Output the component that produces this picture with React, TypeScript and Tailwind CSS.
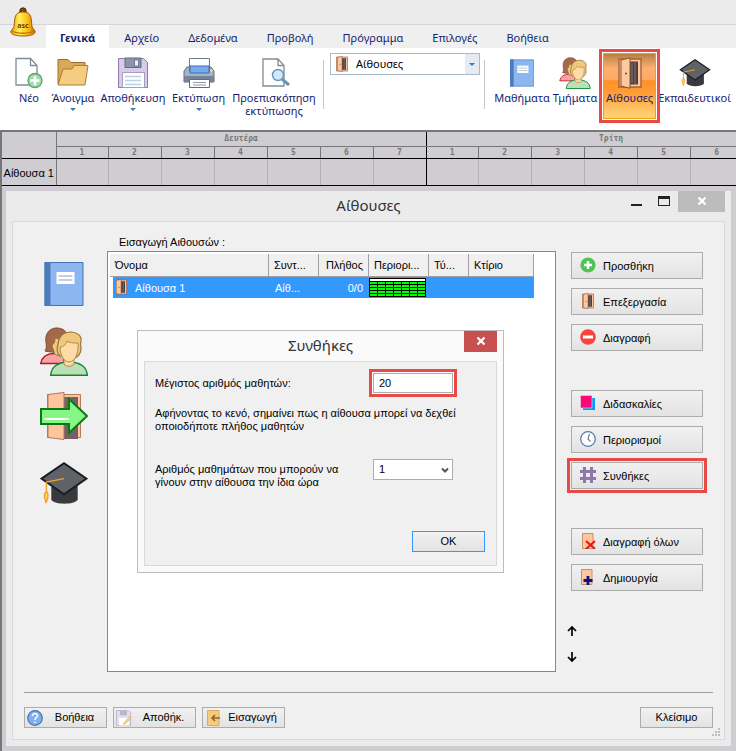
import { useState, type ReactNode } from "react";

const TABS = ["Γενικά", "Αρχείο", "Δεδομένα", "Προβολή", "Πρόγραμμα", "Επιλογές", "Βοήθεια"];
const PERIODS = [1, 2, 3, 4, 5, 6, 7];
const DAYS = ["Δευτέρα", "Τρίτη"];

function DoorIcon({ className }: { className: string }) {
  return (
    <svg className={className} viewBox="0 0 24 32" aria-hidden="true">
      <path d="M1 2h22v28H1z" fill="#ffc59a" stroke="#a3623f" strokeWidth="1.4" />
      <path d="M11 4.5h9v23h-9z" fill="#4b4043" />
      <path d="M17 5v22M14 6v20" stroke="#7a6a6e" strokeWidth="1.3" />
      <path d="M3 3 12 .8v30.4L3 29z" fill="#ffc9a0" stroke="#8f5031" strokeWidth="1" />
      <circle cx="8" cy="16.5" r="1" fill="#7d3c1d" />
    </svg>
  );
}

function DoorArrowIcon() {
  return (
    <svg className="h-12 w-12" viewBox="0 0 48 48" aria-hidden="true">
      <path d="M7.5 2.5h33v43h-33z" fill="#ffc59a" stroke="#b07a5c" />
      <path d="M24 5h14v42H24z" fill="#75606a" />
      <path d="M8 2.5 24 .5v47L8 45.5z" fill="#ffc59a" stroke="#b07a5c" />
      <path d="M1 17h28V7l18 17-18 17V32H1z" fill="#86f686" stroke="#0a7a12" strokeWidth="2" />
      <path d="M4 27h25" stroke="#fff" strokeWidth="2" />
    </svg>
  );
}

function BookIcon({ className }: { className: string }) {
  return (
    <svg className={className} viewBox="0 0 39 44" aria-hidden="true">
      <path d="M.5.5h38v43H.5z" fill="#8bb6f0" stroke="#4473b3" />
      <path d="M0 0h6v44H0z" fill="#4d7cbc" />
      <path d="M12 10h18v12H12z" fill="#fff" />
      <path d="M14 14h14M14 18h14" stroke="#b3bfd3" strokeWidth="1.4" />
    </svg>
  );
}

function PeopleIcon({ className }: { className: string }) {
  return (
    <svg className={className} viewBox="0 0 48 49" aria-hidden="true">
      <path d="M.7 36.5C2 30 7 26.5 14 26.5h10v10z" fill="#f7a3a3" stroke="#b8141c" strokeWidth="1.3" />
      <path d="M5 24C8 20 5 15 6 10 7 4 12 .8 17 1c5 .2 8 2 10 6l-8 17c-3 2-9 1-14 0z" fill="#a5694a" stroke="#7d4c33" />
      <path d="M12 18c2-1 3-3 3-7 2 1 6 1 8 0l1 14c-2 5-10 4-10 0 0-2-2-4-2-7z" fill="#efc87c" stroke="#94723a" />
      <path d="M10.7 48.3C11 40 18 35 29 35s18 5 18.300 13.300z" fill="#b9e0b9" stroke="#14852a" strokeWidth="1.4" />
      <path d="M24 30v7c2 3 8 3 10 0v-7z" fill="#fddca8" stroke="#b08a4a" />
      <path d="M20 29c-4-4-3-8-2-12 1-8 6-12 13-12 6 0 11 4 10 9-1 3 0 6 0 8 0 4-3 8-6 9z" fill="#efc87c" stroke="#96733a" strokeWidth="1.2" />
      <path d="M20 20c4 0 6-3 7-6 2 2 7 2 11 2 1 10-3 19-9 19-5 0-9-7-9-15z" fill="#fddca8" stroke="#b08a4a" />
    </svg>
  );
}

function CapIcon({ className }: { className: string }) {
  return (
    <svg className={className} viewBox="0 0 48 44" aria-hidden="true">
      <path d="M11 22h27v17c-4 5-23 5-27 0z" fill="#3a3a3e" />
      <path d="M1 17 24 1.2 47 17 24 33z" fill="#616266" stroke="#15202c" strokeWidth="2" />
      <path d="M24 17 6 20.5V32" fill="none" stroke="#f2a024" strokeWidth="1.5" />
      <path d="M5 31c-3 4 0 6 .5 11C7 38 9 36 7 31z" fill="#ffcf70" stroke="#f2a024" strokeWidth="1.3" />
    </svg>
  );
}

function BellLogo() {
  return (
    <svg className="h-[30px] w-[26px]" viewBox="0 0 26 30" aria-hidden="true">
      <defs>
        <linearGradient id="bell">
          <stop offset="0" stopColor="#e89a08" />
          <stop offset=".35" stopColor="#fff25a" />
          <stop offset=".7" stopColor="#fbbd10" />
          <stop offset="1" stopColor="#c96c04" />
        </linearGradient>
      </defs>
      <circle cx="13" cy="4" r="3.2" fill="#7a4a0c" stroke="#4d2c06" />
      <path d="M4 20C5 11 4 5 13 5s8 6 9 15l3 4c1 3-4 5-12 5S0 27 1 24z" fill="url(#bell)" stroke="#a35a06" />
      <path d="M2 24c5 3 17 3 22 0" fill="none" stroke="#c67607" strokeWidth="1.3" />
      <text x="13" y="21" textAnchor="middle" fontSize="7" fontWeight="700" fill="#7a3b05">asc</text>
    </svg>
  );
}

function NewIcon() {
  return (
    <svg className="h-8 w-7" viewBox="0 0 28 32" aria-hidden="true">
      <path d="M1 1.5h14.500l6.500 7V28H1z" fill="#fff" stroke="#7f8d99" strokeWidth="1.3" />
      <path d="M15.5 1.5v7H22" fill="none" stroke="#7f8d99" strokeWidth="1.3" />
      <circle cx="20" cy="23.5" r="7" fill="#a3dbaa" stroke="#5ba46a" strokeWidth="1.3" />
      <path d="M20 19v9M15.5 23.5h9" stroke="#fff" strokeWidth="2.5" />
    </svg>
  );
}

function FolderIcon() {
  return (
    <svg className="h-8 w-8" viewBox="0 0 32 32" aria-hidden="true">
      <path d="M1 27V2.5h10l3 3h14V14L25 27z" fill="#dba956" stroke="#98702f" />
      <path d="M1 28 6 12h9l2-3.500h14L28 28z" fill="#f5cd80" stroke="#a87d3a" />
    </svg>
  );
}

function SaveIcon() {
  return (
    <svg className="h-8 w-8" viewBox="0 0 32 32" aria-hidden="true">
      <path d="M1.5 1.5h25l4 4v25h-29z" fill="#d8cbea" stroke="#8d7aa6" />
      <path d="M8 1h16v9.500H8z" fill="#8c96a8" stroke="#5f6a7c" />
      <path d="M17.5 3h4v6h-4z" fill="#eef1f5" stroke="#5f6a7c" strokeWidth=".8" />
      <path d="M5.5 15.5h22v15h-22z" fill="#fff" stroke="#a99bc0" />
      <path d="M8 19.5h16M8 23.5h16M8 27.5h16" stroke="#b9d3e6" strokeWidth="1.3" />
    </svg>
  );
}

function PrintIcon() {
  return (
    <svg className="h-8 w-8" viewBox="0 0 32 32" aria-hidden="true">
      <path d="M1 14l3-4h24l3 4v11H1z" fill="#a4b3c7" stroke="#5c6b7e" />
      <path d="M1 19h30v6H1z" fill="#75849a" />
      <path d="M6.5 1.5h20v13h-20z" fill="#fff" stroke="#6d7c8e" />
      <path d="M7 9h19v7H7z" fill="#78abee" stroke="#3d6eb0" />
      <circle cx="28.5" cy="13.5" r="1.2" fill="#ffe27a" />
      <path d="M6.5 22.5h20v8h-20z" fill="#fff" stroke="#5c6b7e" />
      <path d="M10 25.5h13M10 28h13" stroke="#8c98a8" strokeWidth="1.2" />
    </svg>
  );
}

function PreviewIcon() {
  return (
    <svg className="h-8 w-8" viewBox="0 0 32 32" aria-hidden="true">
      <path d="M5 2h15l6 6.500V29H5z" fill="#fff" stroke="#7f8d99" strokeWidth="1.3" />
      <path d="M20 2v6.500h6" fill="none" stroke="#7f8d99" strokeWidth="1.3" />
      <path d="m24 22 7 6" stroke="#6a93b8" strokeWidth="3" />
      <circle cx="20" cy="18" r="5.5" fill="#cfe7fb" stroke="#6a93b8" strokeWidth="1.4" />
    </svg>
  );
}

const PlusIcon = () => (
  <svg className="h-4 w-4" viewBox="0 0 16 16" aria-hidden="true">
    <circle cx="8" cy="8" r="7.6" fill="#4cc552" />
    <path d="M8 4v8M4 8h8" stroke="#fff" strokeWidth="2.5" />
  </svg>
);

const MinusIcon = () => (
  <svg className="h-4 w-4" viewBox="0 0 16 16" aria-hidden="true">
    <circle cx="8" cy="8" r="7.8" fill="#f8453f" />
    <path d="M3 8h10" stroke="#fff" strokeWidth="3" />
  </svg>
);

const CardsIcon = () => (
  <svg className="h-4 w-4" viewBox="0 0 16 16" aria-hidden="true">
    <path d="M3 3h12v12H3z" fill="#0a95ff" />
    <path d="M.5.5h11.500V13H.5z" fill="#ff0675" stroke="#d6e4e8" strokeWidth=".6" />
  </svg>
);

const ClockIcon = () => (
  <svg className="h-4 w-4" viewBox="0 0 16 16" aria-hidden="true">
    <circle cx="8" cy="8" r="7.3" fill="#fff" stroke="#4f79a8" strokeWidth="1.2" />
    <path d="m9.5 3-1.500 5 2.500 2.500" fill="none" stroke="#6b7f96" strokeWidth="1.2" />
  </svg>
);

const HashIcon = () => (
  <svg className="h-4 w-4" viewBox="0 0 16 16" shapeRendering="crispEdges" aria-hidden="true">
    <path d="M4.5 0v16M11.5 0v16M0 4.5h16M0 11.5h16" stroke="#8f78a8" strokeWidth="3" />
  </svg>
);

const RemoveAllIcon = () => (
  <svg className="h-4 w-4" viewBox="0 0 16 16" aria-hidden="true">
    <path d="M2.5.5H13v15H2.500z" fill="#ffc7a0" stroke="#c98f6d" />
    <path d="m6 8 9 8M15 8l-9 8" stroke="#f01010" strokeWidth="2" />
  </svg>
);

const GenerateIcon = () => (
  <svg className="h-4 w-4" viewBox="0 0 16 16" aria-hidden="true">
    <path d="M1.5.5H12v15H1.500z" fill="#ffc7a0" stroke="#c98f6d" />
    <path d="M8 7v9M3.5 11.5h9" stroke="#0a1380" strokeWidth="2.8" />
  </svg>
);

const HelpIcon = () => (
  <svg className="h-4 w-4" viewBox="0 0 16 16" aria-hidden="true">
    <circle cx="8" cy="8" r="7.3" fill="#82b0ee" stroke="#4272b4" strokeWidth="1.2" />
    <path d="M5.5 6C5.5 2.5 11 3 10.5 6 10.3 7.5 8 7.5 8 10M8 11.5v1.500" fill="none" stroke="#fff" strokeWidth="1.5" />
  </svg>
);

const SaveEditIcon = () => (
  <svg className="h-4 w-4" viewBox="0 0 16 16" aria-hidden="true">
    <path d="M.5.5h12l2 2v13H.5z" fill="#e6def0" stroke="#c3b8d2" />
    <path d="M4 .5h7v5H4z" fill="#b4bac6" />
    <path d="M3 8h10v7.500H3z" fill="#fff" />
    <path d="m8 13 6-7 1.500 1.500-6 6-2 .8z" fill="#f6d99a" stroke="#c9a866" strokeWidth=".7" />
  </svg>
);

const ImportIcon = () => (
  <svg className="h-4 w-4" viewBox="0 0 16 16" aria-hidden="true">
    <path d="M2.5.5H14v15H2.500z" fill="#f7cb7e" stroke="#d9ac5c" />
    <path d="M15 8H7M10 5 7 8l3 3" fill="none" stroke="#8a672a" strokeWidth="1.6" />
  </svg>
);

interface RibbonButtonProps {
  icon: ReactNode;
  label: string;
  width: string;
  menu?: boolean;
}

function RibbonButton({ icon, label, width, menu }: RibbonButtonProps) {
  return (
    <button className={`flex shrink-0 flex-col items-center ${width}`}>
      <span className="flex h-8 items-center">{icon}</span>
      <span className="mt-0.5 text-center leading-[13px] whitespace-pre">{label}</span>
      {menu && <span className="mt-1 border-x-[3px] border-t-[3px] border-x-transparent border-t-[#3f7cb4]" />}
    </button>
  );
}

function SideButton({ icon, label }: { icon: ReactNode; label: string }) {
  return (
    <button className="flex h-[27px] w-[132px] items-center border border-[#acacac] bg-linear-to-b from-[#f1f1f1] to-[#e3e3e3] pl-2">
      <span className="flex w-4 justify-center">{icon}</span>
      <span className="ml-[7px] pt-0.5">{label}</span>
    </button>
  );
}

function FooterButton({ icon, label }: { icon: ReactNode; label: string }) {
  return (
    <button className="flex h-[21px] w-[83px] items-center border border-[#acacac] bg-linear-to-b from-[#f1f1f1] to-[#e3e3e3] pl-0.5">
      {icon}
      <span className="flex-1 text-center">{label}</span>
    </button>
  );
}

function Ribbon() {
  const [tab, setTab] = useState(TABS[0]);

  return (
    <header className="relative shrink-0 text-[#141e6e] font-['Noto_Sans','Open_Sans',sans-serif] text-[11px]">
      <div className="h-[25px] border-b border-[#d6d6d6] bg-[#ebebeb]" />
      <nav className="flex h-[23px] bg-[#efefef] pl-[46px]">
        {TABS.map((t) => (
          <button
            key={t}
            onClick={() => setTab(t)}
            className={`mr-px px-3.5 pt-[3px] ${t === tab ? "bg-white font-bold" : ""}`}
          >
            {t}
          </button>
        ))}
      </nav>
      <div className="absolute top-[7px] left-2.5">
        <BellLogo />
      </div>
      <div className="flex h-[82px] items-start overflow-hidden bg-white pl-3">
        <div className="flex pt-[9px]">
          <RibbonButton icon={<NewIcon />} label="Νέο" width="w-[34px]" />
          <RibbonButton icon={<FolderIcon />} label="Άνοιγμα" width="w-[54px]" menu />
          <RibbonButton icon={<SaveIcon />} label="Αποθήκευση" width="w-[66px]" menu />
          <RibbonButton icon={<PrintIcon />} label="Εκτύπωση" width="w-[65px]" menu />
          <RibbonButton icon={<PreviewIcon />} label={"Προεπισκόπηση\nεκτύπωσης"} width="w-[86px]" />
        </div>
        <div className="mt-3 ml-1.5 h-[49px] w-px shrink-0 bg-[#c6c6c6]" />
        <button className="mt-[5px] ml-1.5 flex h-[22px] w-[150px] shrink-0 items-center border border-[#abbac9] bg-white pl-[5px] text-left text-black">
          <DoorIcon className="h-4 w-3" />
          <span className="ml-2 flex-1">Αίθουσες</span>
          <span className="flex h-full w-3.5 items-center justify-center bg-[#e6eaf3]">
            <span className="border-x-[3px] border-t-[3px] border-x-transparent border-t-[#3f7cb4]" />
          </span>
        </button>
        <div className="mt-3 ml-1 h-[49px] w-px shrink-0 bg-[#c6c6c6]" />
        <div className="ml-2 flex pt-px">
          <div className="flex pt-2">
            <RibbonButton icon={<BookIcon className="h-7 w-6" />} label="Μαθήματα" width="w-[58px]" />
            <RibbonButton icon={<PeopleIcon className="h-8 w-8" />} label="Τμήματα" width="w-12" />
          </div>
          <div className="z-10 shrink-0 border-[3px] border-[#e84a45] bg-white p-px">
            <div className="h-[66px] border border-[#f0a010] bg-[linear-gradient(to_bottom,#b9803e_0%,#fbb072_22%,#ffa862_40%,#ff8f24_42%,#ff9f38_62%,#ffd67c_100%)] pt-[3px]">
              <RibbonButton icon={<DoorIcon className="h-8 w-6" />} label="Αίθουσες" width="w-[51px]" />
            </div>
          </div>
          <div className="pt-2">
            <RibbonButton icon={<CapIcon className="h-7 w-8" />} label="Εκπαιδευτικοί" width="w-[69px]" />
          </div>
        </div>
      </div>
    </header>
  );
}

function Timetable() {
  return (
    <div className="shrink-0 overflow-hidden border-t-2 border-[#777]">
      <table className="w-[794px] table-fixed border-collapse text-center text-[#777]">
        <colgroup>
          <col className="w-[54px]" />
          {DAYS.flatMap((d) => PERIODS.map((p) => <col key={d + p} className={p === 1 ? "w-[52px]" : "w-[53px]"} />))}
        </colgroup>
        <thead className="text-[8px] leading-[9px] font-bold font-['DejaVu_Sans_Mono',monospace]">
          <tr className="h-3.5">
            <td rowSpan={2} className="border-r border-b border-r-[#777] border-b-black" />
            {DAYS.map((d) => (
              <th key={d} colSpan={7} className="border-r border-b border-r-black border-b-[#777] p-0">
                {d}
              </th>
            ))}
          </tr>
          <tr className="h-3">
            {DAYS.flatMap((d) =>
              PERIODS.map((p) => (
                <th key={d + p} className={`border-r border-b border-b-black p-0 ${p === 7 ? "border-r-black" : "border-r-[#777]"}`}>
                  {p}
                </th>
              ))
            )}
          </tr>
        </thead>
        <tbody>
          <tr className="h-[27px]">
            <th className="border-r border-b border-r-[#777] border-b-black p-0 pt-1 text-[11px] font-normal whitespace-nowrap text-black font-['Liberation_Sans',sans-serif]">
              Αίθουσα 1
            </th>
            {DAYS.flatMap((d) =>
              PERIODS.map((p) => (
                <td key={d + p} className={`border-r border-b border-b-black ${p === 7 ? "border-r-black" : "border-r-[#b2b0b4]"}`} />
              ))
            )}
          </tr>
        </tbody>
      </table>
    </div>
  );
}

function RoomList() {
  const head = "border-r border-b border-[#a0a0a0] bg-[#f0f0f0] px-[5px] pt-0.5 pb-0 font-normal";

  return (
    <div className="p-0.5">
      <table className="w-[424px] table-fixed border-separate border-spacing-0 text-left">
        <colgroup>
          <col className="w-[159px]" />
          <col className="w-[50px]" />
          <col className="w-[50px]" />
          <col className="w-[60px]" />
          <col className="w-10" />
          <col className="w-[65px]" />
        </colgroup>
        <thead>
          <tr className="h-[23px]">
            <th className={head}>Όνομα</th>
            <th className={head}>Συντ...</th>
            <th className={`${head} text-right`}>Πλήθος</th>
            <th className={head}>Περιορι...</th>
            <th className={head}>Τύ...</th>
            <th className={head}>Κτίριο</th>
          </tr>
        </thead>
        <tbody>
          <tr className="h-[21px] text-white">
            <td className="p-0 pl-[3px]">
              <span className="flex h-[21px] items-center bg-[#3399ff] pl-0.5">
                <DoorIcon className="h-4 w-3" />
                <span className="ml-2 pt-0.5">Αίθουσα 1</span>
              </span>
            </td>
            <td className="bg-[#3399ff] px-1.5 pt-0.5 pb-0">Αίθ...</td>
            <td className="bg-[#3399ff] px-1.5 pt-0.5 pb-0 text-right">0/0</td>
            <td className="bg-[#3399ff] p-0">
              <svg className="block h-[19px] w-[57px]" viewBox="0 0 57 19" shapeRendering="crispEdges" aria-hidden="true">
                <path d="M0 0h57v19H0z" fill="#000" />
                <path d="M1 1h55v2H1z" fill="#fff" />
                {[4, 7, 10, 13, 16].map((y) => (
                  <path key={y} d={`M1 ${y}h55v2H1z`} fill="#00ff00" />
                ))}
                <path d="M8.5 3v16M16.5 3v16M24.5 3v16M32.5 3v16M40.5 3v16M48.5 3v16" stroke="#000" />
              </svg>
            </td>
            <td className="bg-[#3399ff]" />
            <td className="bg-[#3399ff]" />
          </tr>
        </tbody>
      </table>
    </div>
  );
}

function ConditionsDialog() {
  const [capacity, setCapacity] = useState("20");
  const [lessons, setLessons] = useState("1");

  return (
    <section
      role="dialog"
      aria-labelledby="conditions-title"
      className="absolute top-[78px] left-[29px] w-[367px] border border-[#bcbcbc] bg-[#fafafa] px-1.5 pb-1.5"
    >
      <div className="relative flex h-[30px] items-center justify-center">
        <h2 id="conditions-title" className="text-[15px] text-[#333] font-['Noto_Sans','Open_Sans',sans-serif]">
          Συνθήκες
        </h2>
        <button aria-label="Κλείσιμο παραθύρου" className="absolute top-0 right-0 flex h-[21px] w-[33px] items-center justify-center bg-[#c75050]">
          <svg className="h-2 w-2.5" viewBox="0 0 10 8" aria-hidden="true">
            <path d="m1.5.5 7 7M8.5.5l-7 7" stroke="#fff" strokeWidth="2.2" />
          </svg>
        </button>
      </div>
      <div className="h-[205px] border border-[#d9d9d9] bg-[#f0f0f0] px-2.5 pt-[7px] leading-[13px]">
        <div className="flex h-7 items-center justify-between pr-[29px]">
          <label htmlFor="capacity" className="pt-0.5">Μέγιστος αριθμός μαθητών:</label>
          <span className="flex border-[3px] border-[#e84a45] bg-white p-px">
            <input
              id="capacity"
              value={capacity}
              onChange={(e) => setCapacity(e.target.value)}
              className="h-5 w-20 border border-[#abadb3] bg-white px-[5px] outline-none"
            />
          </span>
        </div>
        <p className="mt-2.5 whitespace-nowrap">
          Αφήνοντας το κενό, σημαίνει πως η αίθουσα μπορεί να δεχθεί
          <br />
          οποιοδήποτε πλήθος μαθητών
        </p>
        <div className="mt-[26px] flex items-start justify-between pr-[33px]">
          <label htmlFor="lessons" className="mt-1">
            Αριθμός μαθημάτων που μπορούν να
            <br />
            γίνουν στην αίθουσα την ίδια ώρα
          </label>
          <span className="relative">
            <select
              id="lessons"
              value={lessons}
              onChange={(e) => setLessons(e.target.value)}
              className="h-[21px] w-20 appearance-none border border-[#abadb3] bg-white px-[5px]"
            >
              <option>1</option>
              <option>2</option>
              <option>3</option>
            </select>
            <svg className="pointer-events-none absolute top-2 right-1 h-[7px] w-2" viewBox="0 0 8 7" aria-hidden="true">
              <path d="m1 1.5 3 3 3-3" fill="none" stroke="#555" strokeWidth="2" />
            </svg>
          </span>
        </div>
        <div className="mt-[42px] flex justify-end pr-px">
          <button className="h-[21px] w-[73px] border border-[#3399ff] bg-linear-to-b from-[#f1f1f1] to-[#e3e3e3]">OK</button>
        </div>
      </div>
    </section>
  );
}

export default function App() {
  return (
    <div className="flex min-h-screen flex-col overflow-hidden bg-[#cfcdd2] text-[11px] text-black font-['Liberation_Sans',Arial,sans-serif]">
      <Ribbon />
      <div className="flex flex-1 flex-col border-l-2 border-[#777]">
        <Timetable />
        <main className="mt-[5px] mr-[5px] mb-[5px] ml-1 flex flex-1 flex-col bg-[#ebebeb] px-1.5 pb-1.5">
          <div className="relative flex h-[30px] items-center justify-center">
            <h1 className="text-[15px] text-[#333] font-['Noto_Sans','Open_Sans',sans-serif]">Αίθουσες</h1>
            <div className="absolute top-0 right-0 flex h-[21px] items-center">
              <button aria-label="Ελαχιστοποίηση" className="h-5 w-[27px]">
                <svg className="h-5 w-[27px]" viewBox="0 0 27 20" aria-hidden="true">
                  <path d="M7 14h11" stroke="#222" strokeWidth="2" />
                </svg>
              </button>
              <button aria-label="Μεγιστοποίηση" className="h-5 w-[27px]">
                <svg className="h-5 w-[27px]" viewBox="0 0 27 20" shapeRendering="crispEdges" aria-hidden="true">
                  <path d="M7.5 5.5h11v9h-11zM7 6.5h12M7 7.5h12" fill="none" stroke="#222" />
                </svg>
              </button>
              <button aria-label="Κλείσιμο παραθύρου" className="flex h-[21px] w-[47px] items-center justify-center bg-[#bcbcbc]">
                <svg className="h-2 w-2.5" viewBox="0 0 10 8" aria-hidden="true">
                  <path d="m1.5.5 7 7M8.5.5l-7 7" stroke="#fff" strokeWidth="2.2" />
                </svg>
              </button>
            </div>
          </div>

          <div className="relative flex flex-1 flex-col border border-[#d9d9d9] bg-[#f0f0f0] px-[11px] pb-[11px]">
            <div className="flex flex-1">
              <div className="flex w-[83px] shrink-0 flex-col items-center pt-10 pr-[3px]">
                <BookIcon className="h-11 w-10" />
                <div className="mt-[21px]"><PeopleIcon className="h-[49px] w-12" /></div>
                <div className="mt-4"><DoorArrowIcon /></div>
                <div className="mt-[22px]"><CapIcon className="h-[43px] w-12" /></div>
              </div>

              <div className="flex flex-1 flex-col">
                <h2 className="flex h-[29px] items-center pt-3 pl-3">Εισαγωγή Αιθουσών :</h2>
                <div className="relative flex-1 border border-[#828790] bg-white">
                  <RoomList />
                  <ConditionsDialog />
                </div>
              </div>

              <div className="ml-[11px] flex w-[146px] shrink-0 flex-col pt-[30px]">
                <div className="flex flex-col gap-[9px] pl-1">
                  <SideButton icon={<PlusIcon />} label="Προσθήκη" />
                  <SideButton icon={<DoorIcon className="h-4 w-3" />} label="Επεξεργασία" />
                  <SideButton icon={<MinusIcon />} label="Διαγραφή" />
                </div>
                <div className="mt-[39px] flex flex-col gap-[9px] pl-1">
                  <SideButton icon={<CardsIcon />} label="Διδασκαλίες" />
                  <SideButton icon={<ClockIcon />} label="Περιορισμοί" />
                  <div className="w-[132px] outline-[3px] outline-offset-1 outline-[#e84a45]">
                    <SideButton icon={<HashIcon />} label="Συνθήκες" />
                  </div>
                </div>
                <div className="mt-[39px] flex flex-col gap-[9px] pl-1">
                  <SideButton icon={<RemoveAllIcon />} label="Διαγραφή όλων" />
                  <SideButton icon={<GenerateIcon />} label="Δημιουργία" />
                </div>
                <div className="mt-[35px] flex flex-col items-start gap-4">
                  <button aria-label="Πάνω">
                    <svg className="h-2.5 w-2.5" viewBox="0 0 10 10" aria-hidden="true">
                      <path d="M5 10V1M1 5l4-4 4 4" fill="none" stroke="#000" strokeWidth="1.7" />
                    </svg>
                  </button>
                  <button aria-label="Κάτω">
                    <svg className="h-2.5 w-2.5" viewBox="0 0 10 10" aria-hidden="true">
                      <path d="M5 0v9M1 5l4 4 4-4" fill="none" stroke="#000" strokeWidth="1.7" />
                    </svg>
                  </button>
                </div>
              </div>
            </div>

            <div className="mt-5 flex items-center gap-1.5 border-t border-[#a0a0a0] pt-3.5">
              <FooterButton icon={<HelpIcon />} label="Βοήθεια" />
              <FooterButton icon={<SaveEditIcon />} label="Αποθήκ." />
              <FooterButton icon={<ImportIcon />} label="Εισαγωγή" />
              <button className="ml-auto h-[21px] w-[73px] border border-[#acacac] bg-linear-to-b from-[#f1f1f1] to-[#e3e3e3]">
                Κλείσιμο
              </button>
            </div>
            <svg className="absolute right-1 bottom-[3px] h-2 w-2" viewBox="0 0 8 8" shapeRendering="crispEdges" aria-hidden="true">
              <path d="M6 0h2v2H6zM3 3h2v2H3zM6 3h2v2H6zM0 6h2v2H0zM3 6h2v2H3zM6 6h2v2H6z" fill="#bfbfbf" />
            </svg>
          </div>
        </main>
      </div>
    </div>
  );
}
